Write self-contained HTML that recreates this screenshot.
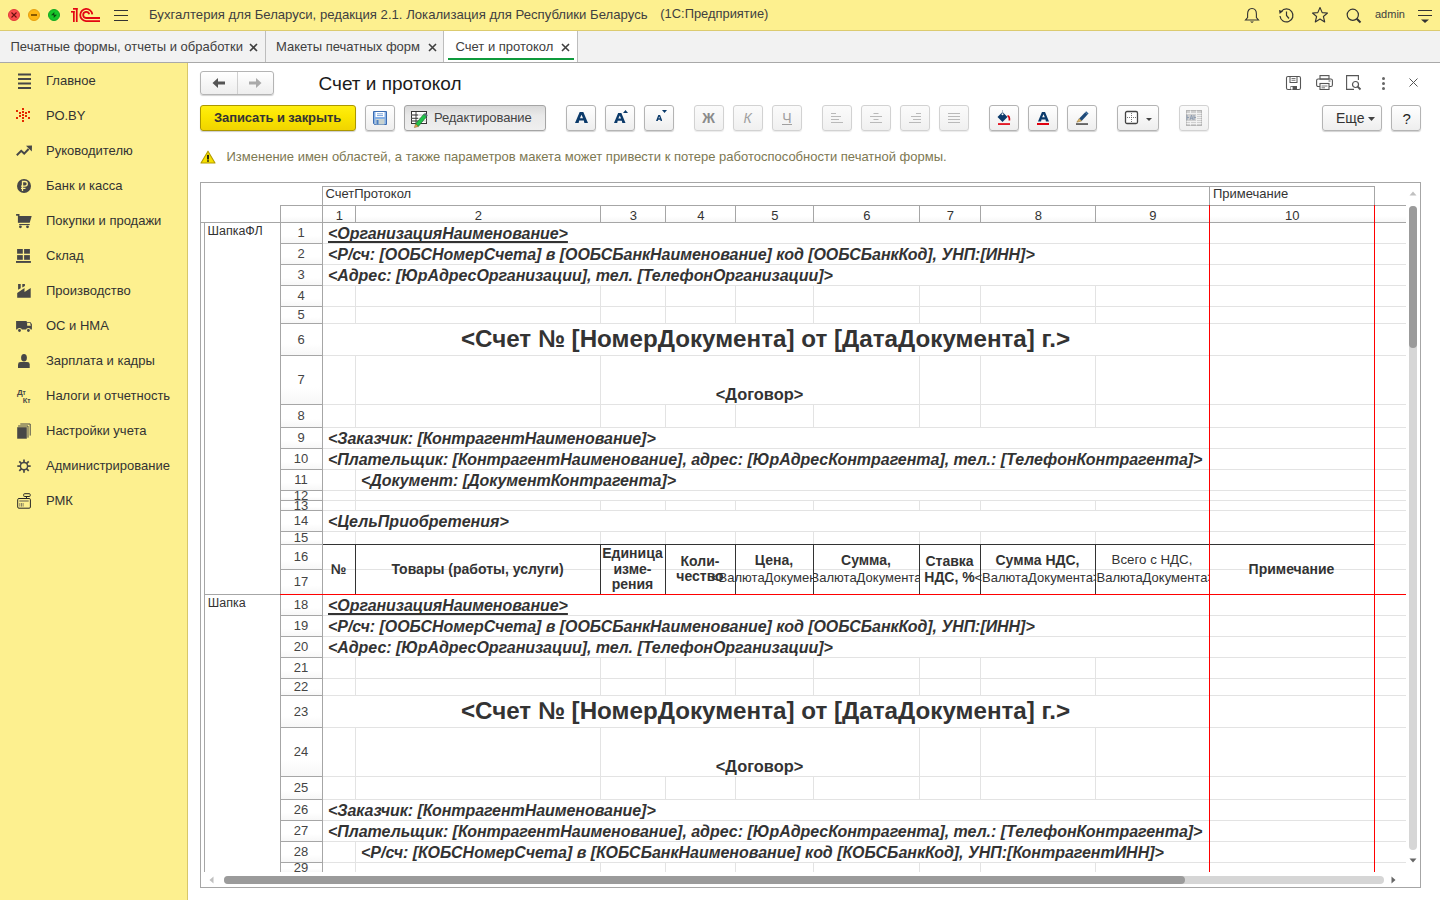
<!DOCTYPE html><html><head><meta charset="utf-8"><style>
*{margin:0;padding:0;box-sizing:border-box}
html,body{width:1440px;height:900px;overflow:hidden;background:#fff;font-family:"Liberation Sans", sans-serif;}
.a{position:absolute}
.t{position:absolute;white-space:nowrap}
.btn{position:absolute;border:1px solid #b4b4b4;border-radius:3px;background:linear-gradient(#ffffff,#eeeeee);box-shadow:0 1px 1px rgba(0,0,0,0.18)}
.btnd{position:absolute;border:1px solid #d2d2d2;border-radius:3px;background:linear-gradient(#fbfbfb,#f0f0f0);box-shadow:0 1px 1px rgba(0,0,0,0.08)}
</style></head><body>
<div class="a" style="left:0;top:0;width:1440px;height:30px;background:#fdf08f"></div>
<div class="a" style="left:0;top:30px;width:1440px;height:1px;background:#dccb6f"></div>
<div class="a" style="left:8px;top:9px;width:12px;height:12px;border-radius:50%;background:#fb4c4c;border:1px solid #e03a3a"></div>
<svg class="a" style="left:8px;top:9px" width="12" height="12"><path d="M3.5 3.5L8.5 8.5M8.5 3.5L3.5 8.5" stroke="#6a1010" stroke-width="1.1"/></svg>
<div class="a" style="left:28px;top:9px;width:12px;height:12px;border-radius:50%;background:#fdb614;border:1px solid #e69f10"></div>
<div class="a" style="left:31px;top:14px;width:6px;height:2px;background:#8a5a00"></div>
<div class="a" style="left:48px;top:9px;width:12px;height:12px;border-radius:50%;background:#17c52a;border:1px solid #12a822"></div>
<svg class="a" style="left:48px;top:9px" width="12" height="12"><path d="M3 6.3L6.3 3 6.3 6.3Z M9 5.7L5.7 9 5.7 5.7Z" fill="#0a4a10"/></svg>
<svg class="a" style="left:0;top:0" width="110" height="30" viewBox="0 0 110 30">
<rect x="71" y="11" width="3.6" height="1.6" fill="#e30613"/>
<rect x="73" y="11" width="1.7" height="11" fill="#e30613"/>
<rect x="73" y="8" width="4.6" height="1.7" fill="#e30613"/>
<rect x="75.9" y="8" width="1.7" height="14" fill="#e30613"/>
<path d="M92.3 14.3 A6.05 6.05 0 1 0 86 21.05 L100 21.05" stroke="#e30613" stroke-width="1.8" fill="none"/>
<path d="M89.2 14.3 A3.05 3.05 0 1 0 86 18 L100 18" stroke="#e30613" stroke-width="1.8" fill="none"/>
</svg>
<div class="a" style="left:114px;top:10px;width:14px;height:1px;background:#333"></div>
<div class="a" style="left:114px;top:15px;width:14px;height:1px;background:#333"></div>
<div class="a" style="left:114px;top:20px;width:14px;height:1px;background:#333"></div>
<div class="t" style="left:149px;top:7.87px;font-size:13.15px;line-height:13.15px;color:#404040;font-weight:normal;font-style:normal;">Бухгалтерия для Беларуси, редакция 2.1. Локализация для Республики Беларусь</div>
<div class="t" style="left:660.3px;top:8.08px;font-size:12.9px;line-height:12.9px;color:#404040;font-weight:normal;font-style:normal;">(1С:Предприятие)</div>
<svg class="a" style="left:1244px;top:7px" width="16" height="17" viewBox="0 0 16 17">
<path d="M8 1.5 C5 1.5 3.6 4 3.6 7 L3.6 10.5 L1.5 13 L14.5 13 L12.4 10.5 L12.4 7 C12.4 4 11 1.5 8 1.5Z" fill="none" stroke="#333" stroke-width="1.1"/>
<path d="M6 14.5 L10 14.5 L8 16Z" fill="#333"/></svg>
<svg class="a" style="left:1277px;top:7px" width="18" height="17" viewBox="0 0 18 17">
<path d="M4.3 4.5 A6.5 6.5 0 1 1 3 9" fill="none" stroke="#333" stroke-width="1.2"/>
<path d="M2 3 L6 4.3 L2.6 7Z" fill="#333"/>
<path d="M9.5 4.5 L9.5 8.5 L12 11.5" fill="none" stroke="#333" stroke-width="1.2"/></svg>
<svg class="a" style="left:1311px;top:6px" width="18" height="18" viewBox="0 0 18 18">
<path d="M9 1.5 L11.2 6.6 L16.5 7 L12.4 10.5 L13.7 16 L9 13 L4.3 16 L5.6 10.5 L1.5 7 L6.8 6.6Z" fill="none" stroke="#333" stroke-width="1.1" stroke-linejoin="round"/></svg>
<svg class="a" style="left:1346px;top:8px" width="17" height="16" viewBox="0 0 17 16">
<circle cx="6.8" cy="6.8" r="5.6" fill="none" stroke="#333" stroke-width="1.2"/>
<path d="M10.8 10.8 L14.5 14.5" stroke="#333" stroke-width="2"/></svg>
<div class="t" style="left:1375px;top:8.69px;font-size:11px;line-height:11px;color:#404040;font-weight:normal;font-style:normal;">admin</div>
<div class="a" style="left:1418px;top:10px;width:14px;height:1px;background:#333"></div>
<div class="a" style="left:1418px;top:15px;width:14px;height:1px;background:#333"></div>
<svg class="a" style="left:1420px;top:19px" width="10" height="5"><path d="M1 0.5 L9 0.5 L5 4Z" fill="#333"/></svg>
<div class="a" style="left:0;top:31px;width:1440px;height:31px;background:#f2f2f2"></div>
<div class="a" style="left:0;top:62px;width:1440px;height:1px;background:#a9a9a9"></div>
<div class="a" style="left:265px;top:31px;width:1px;height:31px;background:#bdbdbd"></div>
<div class="a" style="left:444px;top:31px;width:133px;height:31px;background:#fff"></div>
<div class="a" style="left:443px;top:31px;width:1px;height:31px;background:#bdbdbd"></div>
<div class="a" style="left:577px;top:31px;width:1px;height:31px;background:#bdbdbd"></div>
<div class="a" style="left:448px;top:58px;width:126px;height:2px;background:#0e9a3c"></div>
<div class="t" style="left:10.5px;top:40.00px;font-size:13px;line-height:13px;color:#404040;font-weight:normal;font-style:normal;">Печатные формы, отчеты и обработки</div>
<div class="t" style="left:276px;top:40.00px;font-size:13px;line-height:13px;color:#404040;font-weight:normal;font-style:normal;">Макеты печатных форм</div>
<div class="t" style="left:455.5px;top:40.00px;font-size:13px;line-height:13px;color:#404040;font-weight:normal;font-style:normal;">Счет и протокол</div>
<svg class="a" style="left:249px;top:43px" width="9" height="9"><path d="M1 1L8 8M8 1L1 8" stroke="#404040" stroke-width="1.6"/></svg>
<svg class="a" style="left:428px;top:43px" width="9" height="9"><path d="M1 1L8 8M8 1L1 8" stroke="#404040" stroke-width="1.6"/></svg>
<svg class="a" style="left:561px;top:43px" width="9" height="9"><path d="M1 1L8 8M8 1L1 8" stroke="#404040" stroke-width="1.6"/></svg>
<div class="a" style="left:0;top:63px;width:187px;height:837px;background:#fdf08f"></div>
<div class="a" style="left:187px;top:63px;width:1px;height:837px;background:#d8c76a"></div>
<div class="t" style="left:46px;top:74.00px;font-size:13px;line-height:13px;color:#333;font-weight:normal;font-style:normal;">Главное</div>
<div class="t" style="left:46px;top:109.00px;font-size:13px;line-height:13px;color:#333;font-weight:normal;font-style:normal;">РО.BY</div>
<div class="t" style="left:46px;top:144.00px;font-size:13px;line-height:13px;color:#333;font-weight:normal;font-style:normal;">Руководителю</div>
<div class="t" style="left:46px;top:179.00px;font-size:13px;line-height:13px;color:#333;font-weight:normal;font-style:normal;">Банк и касса</div>
<div class="t" style="left:46px;top:214.00px;font-size:13px;line-height:13px;color:#333;font-weight:normal;font-style:normal;">Покупки и продажи</div>
<div class="t" style="left:46px;top:249.00px;font-size:13px;line-height:13px;color:#333;font-weight:normal;font-style:normal;">Склад</div>
<div class="t" style="left:46px;top:284.00px;font-size:13px;line-height:13px;color:#333;font-weight:normal;font-style:normal;">Производство</div>
<div class="t" style="left:46px;top:319.00px;font-size:13px;line-height:13px;color:#333;font-weight:normal;font-style:normal;">ОС и НМА</div>
<div class="t" style="left:46px;top:354.00px;font-size:13px;line-height:13px;color:#333;font-weight:normal;font-style:normal;">Зарплата и кадры</div>
<div class="t" style="left:46px;top:389.00px;font-size:13px;line-height:13px;color:#333;font-weight:normal;font-style:normal;">Налоги и отчетность</div>
<div class="t" style="left:46px;top:424.00px;font-size:13px;line-height:13px;color:#333;font-weight:normal;font-style:normal;">Настройки учета</div>
<div class="t" style="left:46px;top:459.00px;font-size:13px;line-height:13px;color:#333;font-weight:normal;font-style:normal;">Администрирование</div>
<div class="t" style="left:46px;top:494.00px;font-size:13px;line-height:13px;color:#333;font-weight:normal;font-style:normal;">РМК</div>
<svg class="a" style="left:0;top:0" width="187" height="540" viewBox="0 0 187 540"><rect x="18" y="73.5" width="13" height="2" fill="#474747"/><rect x="18" y="78" width="13" height="2" fill="#474747"/><rect x="18" y="82.5" width="13" height="2" fill="#474747"/><rect x="18" y="87" width="13" height="2" fill="#474747"/><path d="M16.8 155.2 L21.2 150.8 L24.2 153.6 L28.6 149" fill="none" stroke="#474747" stroke-width="2"/><path d="M26 145.8 L32 145.6 L31.8 151.6Z" fill="#474747"/><circle cx="24" cy="186" r="7" fill="#474747"/><path d="M22.5 191 V181.5 H25 A2.3 2.3 0 0 1 25 186.1 H21 M21 188.3 H25.5" fill="none" stroke="#fdf08f" stroke-width="1.3"/><path d="M16.1 214.9 H18.7 V222.7" fill="none" stroke="#474747" stroke-width="1.6"/><path d="M18.7 216.1 H31.7 L29.7 222.7 H18.7Z" fill="#474747"/><rect x="19.2" y="224" width="10.5" height="1.1" fill="#474747"/><circle cx="20.4" cy="226.8" r="1.4" fill="#474747"/><circle cx="27.5" cy="226.8" r="1.4" fill="#474747"/><rect x="17.1" y="249" width="5.7" height="4.7" fill="#474747"/><rect x="24.1" y="249" width="5.8" height="4.7" fill="#474747"/><rect x="17.1" y="255.1" width="5.7" height="4.7" fill="#474747"/><rect x="24.1" y="255.1" width="5.8" height="4.7" fill="#474747"/><rect x="16" y="261" width="14.9" height="1.9" fill="#474747"/><path d="M17.2 292.9 L24.5 288.1 L24.5 291.9 L30.7 288.1 L30.7 297.7 L17.2 297.7Z" fill="#474747"/><path d="M18.1 284.1 H20.7 V288.3 L18.1 289.7Z M22.3 284.1 H24.9 V286 L22.3 287.6Z" fill="#474747"/><path d="M16.1 321 H26.7 V322.2 H30.6 L31.9 324.2 V329.5 H16.1Z" fill="#474747"/><path d="M27.1 323 H30.1 L30.8 325.8 H27.1Z" fill="#fdf08f"/><circle cx="19.5" cy="330.3" r="2.4" fill="#fdf08f"/><circle cx="28.4" cy="330.3" r="2.4" fill="#fdf08f"/><circle cx="19.5" cy="330.5" r="1.4" fill="#474747"/><circle cx="28.4" cy="330.5" r="1.4" fill="#474747"/><ellipse cx="24" cy="357.8" rx="2.9" ry="3.8" fill="#474747"/><path d="M18 367.9 V364.5 Q18 362.1 20.5 362.1 H27.2 Q29.7 362.1 29.7 364.5 V367.9Z" fill="#474747"/><rect x="17.2" y="427.2" width="9.6" height="11.5" fill="#474747"/><path d="M18.1 426 H28 V437.7 M20.3 424 H30.2 V435.6" fill="none" stroke="#474747" stroke-width="1"/><line x1="24.00" y1="462.60" x2="24.00" y2="459.40" stroke="#474747" stroke-width="1.7"/><line x1="26.47" y1="463.63" x2="28.74" y2="461.36" stroke="#474747" stroke-width="1.7"/><line x1="27.50" y1="466.10" x2="30.70" y2="466.10" stroke="#474747" stroke-width="1.7"/><line x1="26.47" y1="468.57" x2="28.74" y2="470.84" stroke="#474747" stroke-width="1.7"/><line x1="24.00" y1="469.60" x2="24.00" y2="472.80" stroke="#474747" stroke-width="1.7"/><line x1="21.53" y1="468.57" x2="19.26" y2="470.84" stroke="#474747" stroke-width="1.7"/><line x1="20.50" y1="466.10" x2="17.30" y2="466.10" stroke="#474747" stroke-width="1.7"/><line x1="21.53" y1="463.63" x2="19.26" y2="461.36" stroke="#474747" stroke-width="1.7"/><circle cx="24" cy="466.1" r="3.6" fill="none" stroke="#474747" stroke-width="1.4"/><rect x="17.7" y="498.5" width="12.7" height="9.7" rx="1.2" fill="none" stroke="#262626" stroke-width="1"/><rect x="23.7" y="493.7" width="6.5" height="2.8" rx="0.8" fill="none" stroke="#262626" stroke-width="1"/><rect x="26" y="496.5" width="1" height="1.5" fill="#262626"/><rect x="19.3" y="500.3" width="9.4" height="1.4" fill="#8a8560"/><rect x="19.3" y="503" width="1" height="3.6" fill="#8a8560"/><rect x="21" y="503" width="1" height="3.6" fill="#8a8560"/><rect x="22.6" y="503" width="1" height="3.6" fill="#8a8560"/></svg>
<div class="a" style="left:22px;top:108px;width:2px;height:2px;background:#e42a00"></div><div class="a" style="left:22px;top:111px;width:2px;height:2px;background:#e42a00"></div><div class="a" style="left:22px;top:114px;width:2px;height:2px;background:#e42a00"></div><div class="a" style="left:22px;top:117px;width:2px;height:2px;background:#e42a00"></div><div class="a" style="left:22px;top:120px;width:2px;height:2px;background:#e42a00"></div><div class="a" style="left:16px;top:110px;width:2px;height:2px;background:#e42a00"></div><div class="a" style="left:16px;top:117px;width:2px;height:2px;background:#e42a00"></div><div class="a" style="left:19px;top:112px;width:2px;height:2px;background:#e42a00"></div><div class="a" style="left:19px;top:115px;width:2px;height:2px;background:#e42a00"></div><div class="a" style="left:25px;top:112px;width:2px;height:2px;background:#e42a00"></div><div class="a" style="left:25px;top:115px;width:2px;height:2px;background:#e42a00"></div><div class="a" style="left:28px;top:111px;width:2px;height:2px;background:#e42a00"></div><div class="a" style="left:28px;top:117px;width:2px;height:2px;background:#e42a00"></div>
<div class="t" style="left:17px;top:388.5px;font-size:8px;line-height:8px;color:#474747;font-weight:bold;letter-spacing:-0.2px">Д<span style="font-size:6.5px">т</span></div>
<div class="t" style="left:22.8px;top:396.5px;font-size:7.5px;line-height:8px;color:#474747;font-weight:bold;letter-spacing:-0.2px">К<span style="font-size:6.5px">т</span></div>
<div class="btn" style="left:200px;top:71px;width:74px;height:24px"></div>
<div class="a" style="left:237px;top:72px;width:1px;height:22px;background:#d0d0d0"></div>
<svg class="a" style="left:211px;top:77px" width="16" height="12" viewBox="0 0 16 12"><path d="M1.5 6 L7 1 V4.6 H14 V7.4 H7 V11Z" fill="#555"/></svg>
<svg class="a" style="left:247px;top:77px" width="16" height="12" viewBox="0 0 16 12"><path d="M14.5 6 L9 1 V4.6 H2 V7.4 H9 V11Z" fill="#aaa"/></svg>
<div class="t" style="left:318.5px;top:73.92px;font-size:19px;line-height:19px;color:#1a1a1a;font-weight:normal;font-style:normal;">Счет и протокол</div>
<svg class="a" style="left:1285px;top:75px" width="17" height="16" viewBox="0 0 17 16">
<rect x="1.5" y="1.5" width="14" height="13" rx="1.5" fill="none" stroke="#555" stroke-width="1.1"/>
<rect x="5" y="1.5" width="7" height="6" fill="none" stroke="#555" stroke-width="1"/>
<path d="M6.5 3.5 H10.5 M6.5 5.3 H10.5" stroke="#555" stroke-width="0.8"/>
<rect x="5.5" y="11" width="6.5" height="3.5" fill="#555"/><rect x="6" y="11.8" width="1.6" height="2.7" fill="#fff"/></svg>
<svg class="a" style="left:1316px;top:75px" width="17" height="15" viewBox="0 0 17 15">
<rect x="4" y="0.6" width="9" height="3.5" fill="none" stroke="#555" stroke-width="1.1"/>
<rect x="0.6" y="4" width="15.8" height="7.5" rx="1.5" fill="none" stroke="#555" stroke-width="1.1"/>
<rect x="4" y="8.5" width="9" height="6" fill="#fff" stroke="#555" stroke-width="1.1"/>
<path d="M5.5 11 H11.5 M5.5 12.8 H9" stroke="#555" stroke-width="0.8"/><path d="M12.5 6 H14.5" stroke="#555" stroke-width="1"/></svg>
<svg class="a" style="left:1346px;top:75px" width="16" height="16" viewBox="0 0 16 16">
<path d="M8 14.4 H0.6 V0.6 H12.4 V5" fill="none" stroke="#555" stroke-width="1.1"/>
<circle cx="9.5" cy="9.5" r="3" fill="none" stroke="#555" stroke-width="1.2"/><path d="M11.7 11.7 L14.5 14.5" stroke="#555" stroke-width="1.8"/></svg>
<div class="a" style="left:1382px;top:77px;width:3px;height:3px;border-radius:50%;background:#666"></div>
<div class="a" style="left:1382px;top:82px;width:3px;height:3px;border-radius:50%;background:#666"></div>
<div class="a" style="left:1382px;top:87px;width:3px;height:3px;border-radius:50%;background:#666"></div>
<svg class="a" style="left:1409px;top:78px" width="9" height="9"><path d="M0.5 0.5L8.5 8.5M8.5 0.5L0.5 8.5" stroke="#555" stroke-width="1"/></svg>
<div class="a" style="left:200px;top:105px;width:156px;height:26px;border:1px solid #ab9700;border-radius:3px;background:linear-gradient(#ffee10,#fae500 45%,#f0d400);box-shadow:0 1px 1px rgba(0,0,0,0.2)"></div>
<div class="t" style="left:214px;top:111.00px;font-size:13px;line-height:13px;color:#333;font-weight:bold;font-style:normal;letter-spacing:-0.1px">Записать и закрыть</div>
<div class="btn" style="left:365px;top:105px;width:30px;height:26px"></div>
<svg class="a" style="left:372px;top:110px" width="16" height="16" viewBox="0 0 16 16">
<path d="M1.5 1.5 H14.5 V14.5 H2.5 L1.5 13.5Z" fill="#86b0e6" stroke="#3c6cb0" stroke-width="1"/>
<rect x="3.5" y="2" width="9" height="5" fill="#fff"/>
<path d="M5 3.8 H11 M5 5.6 H11" stroke="#6a98d6" stroke-width="0.9"/>
<rect x="3.5" y="9" width="9" height="5.5" fill="#c8d2d0"/><rect x="4.5" y="10" width="2" height="4.5" fill="#4a7ec4"/></svg>
<div class="a" style="left:404px;top:105px;width:142px;height:26px;border:1px solid #a5a5a5;border-radius:3px;background:linear-gradient(#d9d9d9,#e9e9e9 40%,#efefef);box-shadow:0 1px 1px rgba(0,0,0,0.15)"></div>
<svg class="a" style="left:410px;top:110px" width="18" height="18" viewBox="0 0 18 18">
<rect x="1.5" y="1.5" width="15" height="12" fill="#fff" stroke="#333" stroke-width="1"/>
<path d="M1.5 5 H16.5 M1.5 8.3 H16.5 M1.5 11 H16.5" stroke="#bbb" stroke-width="0.9"/>
<path d="M1.5 5 H8 M1.5 8.3 H8 M1.5 11 H8 M6 1.5 V13.5" stroke="#333" stroke-width="0.9"/>
<path d="M5.5 14 L13.8 4.2 L16.6 6.6 L8.3 16.4Z" fill="#1fc24a" stroke="#1a6e2e" stroke-width="0.7"/>
<path d="M13.8 4.2 L15 2.8 L17.8 5.2 L16.6 6.6Z" fill="#5a6878"/>
<path d="M5.5 14 L8.3 16.4 L4.4 17.6Z" fill="#e8b050" stroke="#7a5a20" stroke-width="0.5"/></svg>
<div class="t" style="left:434px;top:111.00px;font-size:13px;line-height:13px;color:#444;font-weight:normal;font-style:normal;letter-spacing:-0.1px">Редактирование</div>
<div class="btn" style="left:566px;top:105px;width:30px;height:26px"></div>
<svg class="a" style="left:575px;top:112px" width="13" height="11" viewBox="0 0 13 11"><path fill-rule="evenodd" d="M0 11 L4.68 0 L8.32 0 L13 11 L9.36 11 L8.84 8.58 L4.16 8.58 L3.64 11 Z M4.94 6.16 L8.06 6.16 L6.50 2.64 Z" fill="#0b3a6a"/></svg>
<div class="btn" style="left:605px;top:105px;width:30px;height:26px"></div>
<svg class="a" style="left:614.3px;top:113px" width="11.5" height="10" viewBox="0 0 11.5 10"><path fill-rule="evenodd" d="M0 10 L4.14 0 L7.36 0 L11.5 10 L8.28 10 L7.82 7.80 L3.68 7.80 L3.22 10 Z M4.37 5.60 L7.13 5.60 L5.75 2.40 Z" fill="#0b3a6a"/></svg>
<svg class="a" style="left:623px;top:110px" width="5" height="3"><path d="M0 3 L2.5 0 L5 3Z" fill="#0b3a6a"/></svg>
<div class="btn" style="left:644px;top:105px;width:30px;height:26px"></div>
<svg class="a" style="left:655.8px;top:115px" width="6.4" height="6" viewBox="0 0 6.4 6"><path fill-rule="evenodd" d="M0 6 L2.30 0 L4.10 0 L6.4 6 L4.61 6 L4.35 4.68 L2.05 4.68 L1.79 6 Z M2.43 3.36 L3.97 3.36 L3.20 1.44 Z" fill="#0b3a6a"/></svg>
<svg class="a" style="left:662px;top:110px" width="5" height="3"><path d="M0 0 L5 0 L2.5 3Z" fill="#0b3a6a"/></svg>
<div class="btnd" style="left:694px;top:105px;width:30px;height:26px"></div>
<div class="t" style="left:702.3px;top:111.15px;font-size:14px;line-height:14px;color:#8a8a8a;font-weight:bold;font-style:normal;">Ж</div>
<div class="btnd" style="left:733px;top:105px;width:30px;height:26px"></div>
<div class="t" style="left:743.5px;top:111.15px;font-size:14px;line-height:14px;color:#a0a0a0;font-weight:normal;font-style:normal;font-style:italic">К</div>
<div class="btnd" style="left:772px;top:105px;width:30px;height:26px"></div>
<div class="t" style="left:782.2px;top:111.15px;font-size:14px;line-height:14px;color:#a0a0a0;font-weight:normal;font-style:normal;">Ч</div>
<div class="a" style="left:782px;top:124px;width:10px;height:1px;background:#a0a0a0"></div>
<div class="btnd" style="left:822px;top:105px;width:30px;height:26px"></div>
<svg class="a" style="left:831px;top:113px" width="12" height="10"><rect x="0" y="0" width="5" height="1" fill="#b9b9b9"/><rect x="0" y="3" width="10" height="1" fill="#b9b9b9"/><rect x="0" y="6" width="8" height="1" fill="#b9b9b9"/><rect x="0" y="9" width="12" height="1" fill="#b9b9b9"/></svg>
<div class="btnd" style="left:861px;top:105px;width:30px;height:26px"></div>
<svg class="a" style="left:870px;top:113px" width="12" height="10"><rect x="3.5" y="0" width="5" height="1" fill="#b9b9b9"/><rect x="0.0" y="3" width="12" height="1" fill="#b9b9b9"/><rect x="3.5" y="6" width="5" height="1" fill="#b9b9b9"/><rect x="0.0" y="9" width="12" height="1" fill="#b9b9b9"/></svg>
<div class="btnd" style="left:900px;top:105px;width:30px;height:26px"></div>
<svg class="a" style="left:909px;top:113px" width="12" height="10"><rect x="7" y="0" width="5" height="1" fill="#b9b9b9"/><rect x="2" y="3" width="10" height="1" fill="#b9b9b9"/><rect x="4" y="6" width="8" height="1" fill="#b9b9b9"/><rect x="0" y="9" width="12" height="1" fill="#b9b9b9"/></svg>
<div class="btnd" style="left:939px;top:105px;width:30px;height:26px"></div>
<svg class="a" style="left:948px;top:113px" width="12" height="10"><rect x="0" y="0" width="12" height="1" fill="#b9b9b9"/><rect x="0" y="3" width="12" height="1" fill="#b9b9b9"/><rect x="0" y="6" width="12" height="1" fill="#b9b9b9"/><rect x="0" y="9" width="12" height="1" fill="#b9b9b9"/></svg>
<div class="btn" style="left:989px;top:105px;width:30px;height:26px"></div>
<svg class="a" style="left:996px;top:109px" width="16" height="17" viewBox="0 0 16 17">
<path d="M1.5 8 L6.5 3 L11.5 8 L6.5 13Z" fill="#0b3a6a"/>
<circle cx="6.5" cy="5.2" r="1" fill="#fff"/><path d="M6.5 4.5 V1" stroke="#9ab" stroke-width="0.8"/>
<path d="M11.5 6.8 C13.3 7 13.6 8.5 13.4 11.5" fill="none" stroke="#d4000e" stroke-width="1.7"/>
<rect x="2" y="14.2" width="12" height="1.7" fill="#e0000f"/></svg>
<div class="btn" style="left:1028px;top:105px;width:30px;height:26px"></div>
<svg class="a" style="left:1037.7px;top:112px" width="11" height="9.5" viewBox="0 0 11 9.5"><path fill-rule="evenodd" d="M0 9.5 L3.96 0 L7.04 0 L11 9.5 L7.92 9.5 L7.48 7.41 L3.52 7.41 L3.08 9.5 Z M4.18 5.32 L6.82 5.32 L5.50 2.28 Z" fill="#0b3a6a"/></svg>
<div class="a" style="left:1037px;top:123px;width:12px;height:2px;background:#e0000f"></div>
<div class="btn" style="left:1067px;top:105px;width:30px;height:26px"></div>
<svg class="a" style="left:1075px;top:110px" width="15" height="16" viewBox="0 0 15 16">
<path d="M4.2 8.6 L10.2 2.2 L12.6 4.6 L6.6 11Z" fill="#1e4a7a"/>
<path d="M10.2 2.2 L11.2 1.2 L13.6 3.6 L12.6 4.6Z" fill="#2e5e90"/>
<path d="M4.2 8.6 L6.6 11 L1.8 12.2Z" fill="#e0b860" stroke="#8a6a30" stroke-width="0.5"/>
<rect x="1" y="13.2" width="12" height="1.7" fill="#555"/></svg>
<div class="btn" style="left:1117px;top:105px;width:42px;height:26px"></div>
<svg class="a" style="left:1124px;top:110px" width="15" height="15" viewBox="0 0 15 15">
<rect x="1.5" y="1.5" width="12" height="12" rx="1.5" fill="#fff" stroke="#444" stroke-width="1.3"/>
<path d="M7.5 3 V12 M3 7.5 H12" stroke="#666" stroke-width="0.9" stroke-dasharray="1 1"/></svg>
<svg class="a" style="left:1146px;top:118px" width="6" height="3"><path d="M0 0 L6 0 L3 3Z" fill="#444"/></svg>
<div class="btnd" style="left:1179px;top:105px;width:30px;height:26px"></div>
<svg class="a" style="left:1186px;top:110px" width="16" height="16" viewBox="0 0 16 16">
<rect x="0.5" y="0.5" width="15" height="15" fill="#cfcfcf" stroke="#b5b5b5"/>
<path d="M0.5 3.5 H15.5 M11 5.5 H15.5 M11 7.5 H15.5 M11 9.5 H15.5 M0.5 11.5 H15.5 M0.5 13.5 H15.5" stroke="#f4f4f4" stroke-width="0.9"/>
<path d="M4.5 0.5 V3.5 M10.5 0.5 V15.5 M4.5 11.5 V15.5" stroke="#f4f4f4" stroke-width="0.9"/>
<path d="M1 5 V10 M1 7.5 H3 M4 10 L5.5 5 L7 10 M4.5 8.3 H6.5 M8 5 V10 M8 7.5 H10" stroke="#8a9ab0" stroke-width="0.9" fill="none"/></svg>
<div class="btn" style="left:1322px;top:105px;width:60px;height:26px"></div>
<div class="t" style="left:1336px;top:111.15px;font-size:14px;line-height:14px;color:#333;font-weight:normal;font-style:normal;">Еще</div>
<svg class="a" style="left:1368px;top:117px" width="7" height="4"><path d="M0 0 L7 0 L3.5 4Z" fill="#444"/></svg>
<div class="btn" style="left:1391px;top:105px;width:30px;height:26px"></div>
<div class="t" style="left:1402.5px;top:110.80px;font-size:15px;line-height:15px;color:#222;font-weight:normal;font-style:normal;">?</div>
<svg class="a" style="left:200px;top:150px" width="16" height="14" viewBox="0 0 16 14">
<path d="M8 1.2 L15 13 H1Z" fill="#f7e000" stroke="#b49c00" stroke-width="1.1" stroke-linejoin="round"/>
<rect x="7" y="4.9" width="2" height="4.6" fill="#2a2a10"/><rect x="7" y="10.3" width="2" height="1.4" fill="#2a2a10"/></svg>
<div class="t" style="left:226.5px;top:150.00px;font-size:13px;line-height:13px;color:#7d7852;font-weight:normal;font-style:normal;">Изменение имен областей, а также параметров макета может привести к потере работоспособности печатной формы.</div>
<div class="a" style="left:200px;top:182px;width:1221px;height:706px;border:1px solid #a6a6a6;background:#fff"></div>
<div class="a" style="left:201px;top:183px;width:1205px;height:689px;overflow:hidden">
<div class="a" style="left:79px;top:39px;width:42px;height:21px;background:linear-gradient(#fff 65%,#f7f7f7)"></div>
<div class="a" style="left:79px;top:60px;width:42px;height:21px;background:linear-gradient(#fff 65%,#f7f7f7)"></div>
<div class="a" style="left:79px;top:81px;width:42px;height:21px;background:linear-gradient(#fff 65%,#f7f7f7)"></div>
<div class="a" style="left:79px;top:102px;width:42px;height:21px;background:linear-gradient(#fff 65%,#f7f7f7)"></div>
<div class="a" style="left:79px;top:123px;width:42px;height:17px;background:linear-gradient(#fff 65%,#f7f7f7)"></div>
<div class="a" style="left:79px;top:140px;width:42px;height:32px;background:linear-gradient(#fff 65%,#f7f7f7)"></div>
<div class="a" style="left:79px;top:172px;width:42px;height:49px;background:linear-gradient(#fff 65%,#f7f7f7)"></div>
<div class="a" style="left:79px;top:221px;width:42px;height:23px;background:linear-gradient(#fff 65%,#f7f7f7)"></div>
<div class="a" style="left:79px;top:244px;width:42px;height:21px;background:linear-gradient(#fff 65%,#f7f7f7)"></div>
<div class="a" style="left:79px;top:265px;width:42px;height:21px;background:linear-gradient(#fff 65%,#f7f7f7)"></div>
<div class="a" style="left:79px;top:286px;width:42px;height:21px;background:linear-gradient(#fff 65%,#f7f7f7)"></div>
<div class="a" style="left:79px;top:307px;width:42px;height:10px;background:linear-gradient(#fff 65%,#f7f7f7)"></div>
<div class="a" style="left:79px;top:317px;width:42px;height:10px;background:linear-gradient(#fff 65%,#f7f7f7)"></div>
<div class="a" style="left:79px;top:327px;width:42px;height:21px;background:linear-gradient(#fff 65%,#f7f7f7)"></div>
<div class="a" style="left:79px;top:348px;width:42px;height:13px;background:linear-gradient(#fff 65%,#f7f7f7)"></div>
<div class="a" style="left:79px;top:361px;width:42px;height:25px;background:linear-gradient(#fff 65%,#f7f7f7)"></div>
<div class="a" style="left:79px;top:386px;width:42px;height:25px;background:linear-gradient(#fff 65%,#f7f7f7)"></div>
<div class="a" style="left:79px;top:411px;width:42px;height:21px;background:linear-gradient(#fff 65%,#f7f7f7)"></div>
<div class="a" style="left:79px;top:432px;width:42px;height:21px;background:linear-gradient(#fff 65%,#f7f7f7)"></div>
<div class="a" style="left:79px;top:453px;width:42px;height:21px;background:linear-gradient(#fff 65%,#f7f7f7)"></div>
<div class="a" style="left:79px;top:474px;width:42px;height:21px;background:linear-gradient(#fff 65%,#f7f7f7)"></div>
<div class="a" style="left:79px;top:495px;width:42px;height:17px;background:linear-gradient(#fff 65%,#f7f7f7)"></div>
<div class="a" style="left:79px;top:512px;width:42px;height:32px;background:linear-gradient(#fff 65%,#f7f7f7)"></div>
<div class="a" style="left:79px;top:544px;width:42px;height:49px;background:linear-gradient(#fff 65%,#f7f7f7)"></div>
<div class="a" style="left:79px;top:593px;width:42px;height:23px;background:linear-gradient(#fff 65%,#f7f7f7)"></div>
<div class="a" style="left:79px;top:616px;width:42px;height:21px;background:linear-gradient(#fff 65%,#f7f7f7)"></div>
<div class="a" style="left:79px;top:637px;width:42px;height:21px;background:linear-gradient(#fff 65%,#f7f7f7)"></div>
<div class="a" style="left:79px;top:658px;width:42px;height:21px;background:linear-gradient(#fff 65%,#f7f7f7)"></div>
<div class="a" style="left:79px;top:679px;width:42px;height:10px;background:linear-gradient(#fff 65%,#f7f7f7)"></div>
<div class="a" style="left:121px;top:22px;width:33px;height:17px;background:linear-gradient(#fff 65%,#f7f7f7)"></div>
<div class="a" style="left:154px;top:22px;width:245px;height:17px;background:linear-gradient(#fff 65%,#f7f7f7)"></div>
<div class="a" style="left:399px;top:22px;width:65px;height:17px;background:linear-gradient(#fff 65%,#f7f7f7)"></div>
<div class="a" style="left:464px;top:22px;width:70px;height:17px;background:linear-gradient(#fff 65%,#f7f7f7)"></div>
<div class="a" style="left:534px;top:22px;width:78px;height:17px;background:linear-gradient(#fff 65%,#f7f7f7)"></div>
<div class="a" style="left:612px;top:22px;width:106px;height:17px;background:linear-gradient(#fff 65%,#f7f7f7)"></div>
<div class="a" style="left:718px;top:22px;width:61px;height:17px;background:linear-gradient(#fff 65%,#f7f7f7)"></div>
<div class="a" style="left:779px;top:22px;width:115px;height:17px;background:linear-gradient(#fff 65%,#f7f7f7)"></div>
<div class="a" style="left:894px;top:22px;width:114px;height:17px;background:linear-gradient(#fff 65%,#f7f7f7)"></div>
<div class="a" style="left:1008px;top:22px;width:165px;height:17px;background:linear-gradient(#fff 65%,#f7f7f7)"></div>
<div class="a" style="left:1173px;top:22px;width:32px;height:17px;background:linear-gradient(#fff 65%,#f7f7f7)"></div>
<div class="a" style="left:79px;top:22px;width:42px;height:17px;background:linear-gradient(#fff 65%,#f7f7f7)"></div>
<div class="a" style="left:121px;top:60px;width:1084px;height:1px;background:#e3e3e3"></div>
<div class="a" style="left:121px;top:81px;width:1084px;height:1px;background:#e3e3e3"></div>
<div class="a" style="left:121px;top:102px;width:1084px;height:1px;background:#e3e3e3"></div>
<div class="a" style="left:121px;top:123px;width:1084px;height:1px;background:#e3e3e3"></div>
<div class="a" style="left:121px;top:140px;width:1084px;height:1px;background:#e3e3e3"></div>
<div class="a" style="left:121px;top:172px;width:1084px;height:1px;background:#e3e3e3"></div>
<div class="a" style="left:121px;top:221px;width:1084px;height:1px;background:#e3e3e3"></div>
<div class="a" style="left:121px;top:244px;width:1084px;height:1px;background:#e3e3e3"></div>
<div class="a" style="left:121px;top:265px;width:1084px;height:1px;background:#e3e3e3"></div>
<div class="a" style="left:121px;top:286px;width:1084px;height:1px;background:#e3e3e3"></div>
<div class="a" style="left:121px;top:307px;width:1084px;height:1px;background:#e3e3e3"></div>
<div class="a" style="left:121px;top:317px;width:1084px;height:1px;background:#e3e3e3"></div>
<div class="a" style="left:121px;top:327px;width:1084px;height:1px;background:#e3e3e3"></div>
<div class="a" style="left:121px;top:348px;width:1084px;height:1px;background:#e3e3e3"></div>
<div class="a" style="left:121px;top:361px;width:1084px;height:1px;background:#e3e3e3"></div>
<div class="a" style="left:121px;top:386px;width:1084px;height:1px;background:#e3e3e3"></div>
<div class="a" style="left:121px;top:411px;width:1084px;height:1px;background:#e3e3e3"></div>
<div class="a" style="left:121px;top:432px;width:1084px;height:1px;background:#e3e3e3"></div>
<div class="a" style="left:121px;top:453px;width:1084px;height:1px;background:#e3e3e3"></div>
<div class="a" style="left:121px;top:474px;width:1084px;height:1px;background:#e3e3e3"></div>
<div class="a" style="left:121px;top:495px;width:1084px;height:1px;background:#e3e3e3"></div>
<div class="a" style="left:121px;top:512px;width:1084px;height:1px;background:#e3e3e3"></div>
<div class="a" style="left:121px;top:544px;width:1084px;height:1px;background:#e3e3e3"></div>
<div class="a" style="left:121px;top:593px;width:1084px;height:1px;background:#e3e3e3"></div>
<div class="a" style="left:121px;top:616px;width:1084px;height:1px;background:#e3e3e3"></div>
<div class="a" style="left:121px;top:637px;width:1084px;height:1px;background:#e3e3e3"></div>
<div class="a" style="left:121px;top:658px;width:1084px;height:1px;background:#e3e3e3"></div>
<div class="a" style="left:121px;top:679px;width:1084px;height:1px;background:#e3e3e3"></div>
<div class="a" style="left:154px;top:103px;width:1px;height:20px;background:#e3e3e3"></div>
<div class="a" style="left:399px;top:103px;width:1px;height:20px;background:#e3e3e3"></div>
<div class="a" style="left:464px;top:103px;width:1px;height:20px;background:#e3e3e3"></div>
<div class="a" style="left:534px;top:103px;width:1px;height:20px;background:#e3e3e3"></div>
<div class="a" style="left:612px;top:103px;width:1px;height:20px;background:#e3e3e3"></div>
<div class="a" style="left:718px;top:103px;width:1px;height:20px;background:#e3e3e3"></div>
<div class="a" style="left:779px;top:103px;width:1px;height:20px;background:#e3e3e3"></div>
<div class="a" style="left:894px;top:103px;width:1px;height:20px;background:#e3e3e3"></div>
<div class="a" style="left:154px;top:124px;width:1px;height:16px;background:#e3e3e3"></div>
<div class="a" style="left:399px;top:124px;width:1px;height:16px;background:#e3e3e3"></div>
<div class="a" style="left:464px;top:124px;width:1px;height:16px;background:#e3e3e3"></div>
<div class="a" style="left:534px;top:124px;width:1px;height:16px;background:#e3e3e3"></div>
<div class="a" style="left:612px;top:124px;width:1px;height:16px;background:#e3e3e3"></div>
<div class="a" style="left:718px;top:124px;width:1px;height:16px;background:#e3e3e3"></div>
<div class="a" style="left:779px;top:124px;width:1px;height:16px;background:#e3e3e3"></div>
<div class="a" style="left:894px;top:124px;width:1px;height:16px;background:#e3e3e3"></div>
<div class="a" style="left:154px;top:173px;width:1px;height:48px;background:#e3e3e3"></div>
<div class="a" style="left:399px;top:173px;width:1px;height:48px;background:#e3e3e3"></div>
<div class="a" style="left:718px;top:173px;width:1px;height:48px;background:#e3e3e3"></div>
<div class="a" style="left:779px;top:173px;width:1px;height:48px;background:#e3e3e3"></div>
<div class="a" style="left:894px;top:173px;width:1px;height:48px;background:#e3e3e3"></div>
<div class="a" style="left:154px;top:222px;width:1px;height:22px;background:#e3e3e3"></div>
<div class="a" style="left:399px;top:222px;width:1px;height:22px;background:#e3e3e3"></div>
<div class="a" style="left:464px;top:222px;width:1px;height:22px;background:#e3e3e3"></div>
<div class="a" style="left:534px;top:222px;width:1px;height:22px;background:#e3e3e3"></div>
<div class="a" style="left:612px;top:222px;width:1px;height:22px;background:#e3e3e3"></div>
<div class="a" style="left:718px;top:222px;width:1px;height:22px;background:#e3e3e3"></div>
<div class="a" style="left:779px;top:222px;width:1px;height:22px;background:#e3e3e3"></div>
<div class="a" style="left:894px;top:222px;width:1px;height:22px;background:#e3e3e3"></div>
<div class="a" style="left:154px;top:287px;width:1px;height:20px;background:#e3e3e3"></div>
<div class="a" style="left:154px;top:308px;width:1px;height:9px;background:#e3e3e3"></div>
<div class="a" style="left:154px;top:318px;width:1px;height:9px;background:#e3e3e3"></div>
<div class="a" style="left:399px;top:318px;width:1px;height:9px;background:#e3e3e3"></div>
<div class="a" style="left:464px;top:318px;width:1px;height:9px;background:#e3e3e3"></div>
<div class="a" style="left:534px;top:318px;width:1px;height:9px;background:#e3e3e3"></div>
<div class="a" style="left:612px;top:318px;width:1px;height:9px;background:#e3e3e3"></div>
<div class="a" style="left:718px;top:318px;width:1px;height:9px;background:#e3e3e3"></div>
<div class="a" style="left:779px;top:318px;width:1px;height:9px;background:#e3e3e3"></div>
<div class="a" style="left:894px;top:318px;width:1px;height:9px;background:#e3e3e3"></div>
<div class="a" style="left:154px;top:349px;width:1px;height:12px;background:#e3e3e3"></div>
<div class="a" style="left:399px;top:349px;width:1px;height:12px;background:#e3e3e3"></div>
<div class="a" style="left:464px;top:349px;width:1px;height:12px;background:#e3e3e3"></div>
<div class="a" style="left:534px;top:349px;width:1px;height:12px;background:#e3e3e3"></div>
<div class="a" style="left:612px;top:349px;width:1px;height:12px;background:#e3e3e3"></div>
<div class="a" style="left:718px;top:349px;width:1px;height:12px;background:#e3e3e3"></div>
<div class="a" style="left:779px;top:349px;width:1px;height:12px;background:#e3e3e3"></div>
<div class="a" style="left:894px;top:349px;width:1px;height:12px;background:#e3e3e3"></div>
<div class="a" style="left:154px;top:475px;width:1px;height:20px;background:#e3e3e3"></div>
<div class="a" style="left:399px;top:475px;width:1px;height:20px;background:#e3e3e3"></div>
<div class="a" style="left:464px;top:475px;width:1px;height:20px;background:#e3e3e3"></div>
<div class="a" style="left:534px;top:475px;width:1px;height:20px;background:#e3e3e3"></div>
<div class="a" style="left:612px;top:475px;width:1px;height:20px;background:#e3e3e3"></div>
<div class="a" style="left:718px;top:475px;width:1px;height:20px;background:#e3e3e3"></div>
<div class="a" style="left:779px;top:475px;width:1px;height:20px;background:#e3e3e3"></div>
<div class="a" style="left:894px;top:475px;width:1px;height:20px;background:#e3e3e3"></div>
<div class="a" style="left:154px;top:496px;width:1px;height:16px;background:#e3e3e3"></div>
<div class="a" style="left:399px;top:496px;width:1px;height:16px;background:#e3e3e3"></div>
<div class="a" style="left:464px;top:496px;width:1px;height:16px;background:#e3e3e3"></div>
<div class="a" style="left:534px;top:496px;width:1px;height:16px;background:#e3e3e3"></div>
<div class="a" style="left:612px;top:496px;width:1px;height:16px;background:#e3e3e3"></div>
<div class="a" style="left:718px;top:496px;width:1px;height:16px;background:#e3e3e3"></div>
<div class="a" style="left:779px;top:496px;width:1px;height:16px;background:#e3e3e3"></div>
<div class="a" style="left:894px;top:496px;width:1px;height:16px;background:#e3e3e3"></div>
<div class="a" style="left:154px;top:545px;width:1px;height:48px;background:#e3e3e3"></div>
<div class="a" style="left:399px;top:545px;width:1px;height:48px;background:#e3e3e3"></div>
<div class="a" style="left:718px;top:545px;width:1px;height:48px;background:#e3e3e3"></div>
<div class="a" style="left:779px;top:545px;width:1px;height:48px;background:#e3e3e3"></div>
<div class="a" style="left:894px;top:545px;width:1px;height:48px;background:#e3e3e3"></div>
<div class="a" style="left:154px;top:594px;width:1px;height:22px;background:#e3e3e3"></div>
<div class="a" style="left:399px;top:594px;width:1px;height:22px;background:#e3e3e3"></div>
<div class="a" style="left:464px;top:594px;width:1px;height:22px;background:#e3e3e3"></div>
<div class="a" style="left:534px;top:594px;width:1px;height:22px;background:#e3e3e3"></div>
<div class="a" style="left:612px;top:594px;width:1px;height:22px;background:#e3e3e3"></div>
<div class="a" style="left:718px;top:594px;width:1px;height:22px;background:#e3e3e3"></div>
<div class="a" style="left:779px;top:594px;width:1px;height:22px;background:#e3e3e3"></div>
<div class="a" style="left:894px;top:594px;width:1px;height:22px;background:#e3e3e3"></div>
<div class="a" style="left:154px;top:659px;width:1px;height:20px;background:#e3e3e3"></div>
<div class="a" style="left:154px;top:680px;width:1px;height:9px;background:#e3e3e3"></div>
<div class="a" style="left:399px;top:680px;width:1px;height:9px;background:#e3e3e3"></div>
<div class="a" style="left:464px;top:680px;width:1px;height:9px;background:#e3e3e3"></div>
<div class="a" style="left:534px;top:680px;width:1px;height:9px;background:#e3e3e3"></div>
<div class="a" style="left:612px;top:680px;width:1px;height:9px;background:#e3e3e3"></div>
<div class="a" style="left:718px;top:680px;width:1px;height:9px;background:#e3e3e3"></div>
<div class="a" style="left:779px;top:680px;width:1px;height:9px;background:#e3e3e3"></div>
<div class="a" style="left:894px;top:680px;width:1px;height:9px;background:#e3e3e3"></div>
<div class="a" style="left:79px;top:39px;width:42px;height:1px;background:#a6a6a6"></div>
<div class="a" style="left:79px;top:60px;width:42px;height:1px;background:#a6a6a6"></div>
<div class="a" style="left:79px;top:81px;width:42px;height:1px;background:#a6a6a6"></div>
<div class="a" style="left:79px;top:102px;width:42px;height:1px;background:#a6a6a6"></div>
<div class="a" style="left:79px;top:123px;width:42px;height:1px;background:#a6a6a6"></div>
<div class="a" style="left:79px;top:140px;width:42px;height:1px;background:#a6a6a6"></div>
<div class="a" style="left:79px;top:172px;width:42px;height:1px;background:#a6a6a6"></div>
<div class="a" style="left:79px;top:221px;width:42px;height:1px;background:#a6a6a6"></div>
<div class="a" style="left:79px;top:244px;width:42px;height:1px;background:#a6a6a6"></div>
<div class="a" style="left:79px;top:265px;width:42px;height:1px;background:#a6a6a6"></div>
<div class="a" style="left:79px;top:286px;width:42px;height:1px;background:#a6a6a6"></div>
<div class="a" style="left:79px;top:307px;width:42px;height:1px;background:#a6a6a6"></div>
<div class="a" style="left:79px;top:317px;width:42px;height:1px;background:#a6a6a6"></div>
<div class="a" style="left:79px;top:327px;width:42px;height:1px;background:#a6a6a6"></div>
<div class="a" style="left:79px;top:348px;width:42px;height:1px;background:#a6a6a6"></div>
<div class="a" style="left:79px;top:361px;width:42px;height:1px;background:#a6a6a6"></div>
<div class="a" style="left:79px;top:386px;width:42px;height:1px;background:#a6a6a6"></div>
<div class="a" style="left:79px;top:411px;width:42px;height:1px;background:#a6a6a6"></div>
<div class="a" style="left:79px;top:432px;width:42px;height:1px;background:#a6a6a6"></div>
<div class="a" style="left:79px;top:453px;width:42px;height:1px;background:#a6a6a6"></div>
<div class="a" style="left:79px;top:474px;width:42px;height:1px;background:#a6a6a6"></div>
<div class="a" style="left:79px;top:495px;width:42px;height:1px;background:#a6a6a6"></div>
<div class="a" style="left:79px;top:512px;width:42px;height:1px;background:#a6a6a6"></div>
<div class="a" style="left:79px;top:544px;width:42px;height:1px;background:#a6a6a6"></div>
<div class="a" style="left:79px;top:593px;width:42px;height:1px;background:#a6a6a6"></div>
<div class="a" style="left:79px;top:616px;width:42px;height:1px;background:#a6a6a6"></div>
<div class="a" style="left:79px;top:637px;width:42px;height:1px;background:#a6a6a6"></div>
<div class="a" style="left:79px;top:658px;width:42px;height:1px;background:#a6a6a6"></div>
<div class="a" style="left:79px;top:679px;width:42px;height:1px;background:#a6a6a6"></div>
<div class="a" style="left:79px;top:22px;width:1px;height:667px;background:#a6a6a6"></div>
<div class="a" style="left:121px;top:3px;width:1px;height:686px;background:#a6a6a6"></div>
<div class="a" style="left:79px;top:22px;width:1126px;height:1px;background:#a6a6a6"></div>
<div class="a" style="left:0px;top:39px;width:1205px;height:1px;background:#a6a6a6"></div>
<div class="a" style="left:154px;top:22px;width:1px;height:17px;background:#a6a6a6"></div>
<div class="a" style="left:399px;top:22px;width:1px;height:17px;background:#a6a6a6"></div>
<div class="a" style="left:464px;top:22px;width:1px;height:17px;background:#a6a6a6"></div>
<div class="a" style="left:534px;top:22px;width:1px;height:17px;background:#a6a6a6"></div>
<div class="a" style="left:612px;top:22px;width:1px;height:17px;background:#a6a6a6"></div>
<div class="a" style="left:718px;top:22px;width:1px;height:17px;background:#a6a6a6"></div>
<div class="a" style="left:779px;top:22px;width:1px;height:17px;background:#a6a6a6"></div>
<div class="a" style="left:894px;top:22px;width:1px;height:17px;background:#a6a6a6"></div>
<div class="a" style="left:1008px;top:22px;width:1px;height:17px;background:#a6a6a6"></div>
<div class="a" style="left:1173px;top:22px;width:1px;height:17px;background:#a6a6a6"></div>
<div class="a" style="left:121px;top:3px;width:1053px;height:1px;background:#a6a6a6"></div>
<div class="a" style="left:1008px;top:3px;width:1px;height:19px;background:#a6a6a6"></div>
<div class="a" style="left:1173px;top:3px;width:1px;height:19px;background:#a6a6a6"></div>
<div class="a" style="left:3px;top:39px;width:1px;height:650px;background:#a6a6a6"></div>
<div class="a" style="left:3px;top:411px;width:76px;height:1px;background:#a6a6a6"></div>
<div class="a" style="left:1008px;top:22px;width:1px;height:667px;background:#ff0000"></div>
<div class="a" style="left:1173px;top:22px;width:1px;height:667px;background:#ff0000"></div>
<div class="a" style="left:79px;top:411px;width:1126px;height:1px;background:#ff0000"></div>
<div class="t" style="left:124.5px;top:3.70px;font-size:13px;line-height:13px;color:#333;font-weight:normal;font-style:normal;">СчетПротокол</div>
<div class="t" style="left:1012px;top:3.70px;font-size:13px;line-height:13px;color:#333;font-weight:normal;font-style:normal;">Примечание</div>
<div class="t" style="left:-861.75px;width:2000px;text-align:center;top:26.20px;font-size:13px;line-height:13px;color:#333;font-weight:normal;font-style:normal;">1</div>
<div class="t" style="left:-722.75px;width:2000px;text-align:center;top:26.20px;font-size:13px;line-height:13px;color:#333;font-weight:normal;font-style:normal;">2</div>
<div class="t" style="left:-567.75px;width:2000px;text-align:center;top:26.20px;font-size:13px;line-height:13px;color:#333;font-weight:normal;font-style:normal;">3</div>
<div class="t" style="left:-500.25px;width:2000px;text-align:center;top:26.20px;font-size:13px;line-height:13px;color:#333;font-weight:normal;font-style:normal;">4</div>
<div class="t" style="left:-426.25px;width:2000px;text-align:center;top:26.20px;font-size:13px;line-height:13px;color:#333;font-weight:normal;font-style:normal;">5</div>
<div class="t" style="left:-334.25px;width:2000px;text-align:center;top:26.20px;font-size:13px;line-height:13px;color:#333;font-weight:normal;font-style:normal;">6</div>
<div class="t" style="left:-250.75px;width:2000px;text-align:center;top:26.20px;font-size:13px;line-height:13px;color:#333;font-weight:normal;font-style:normal;">7</div>
<div class="t" style="left:-162.75px;width:2000px;text-align:center;top:26.20px;font-size:13px;line-height:13px;color:#333;font-weight:normal;font-style:normal;">8</div>
<div class="t" style="left:-48.25px;width:2000px;text-align:center;top:26.20px;font-size:13px;line-height:13px;color:#333;font-weight:normal;font-style:normal;">9</div>
<div class="t" style="left:91.25px;width:2000px;text-align:center;top:26.20px;font-size:13px;line-height:13px;color:#333;font-weight:normal;font-style:normal;">10</div>
<div class="t" style="left:6.5px;top:41.92px;font-size:12.5px;line-height:12.5px;color:#333;font-weight:normal;font-style:normal;">ШапкаФЛ</div>
<div class="t" style="left:6.800000000000011px;top:413.92px;font-size:12.5px;line-height:12.5px;color:#333;font-weight:normal;font-style:normal;">Шапка</div>
<div class="t" style="left:-900.0px;width:2000px;text-align:center;top:43.20px;font-size:13px;line-height:13px;color:#444;font-weight:normal;font-style:normal;">1</div>
<div class="t" style="left:-900.0px;width:2000px;text-align:center;top:64.20px;font-size:13px;line-height:13px;color:#444;font-weight:normal;font-style:normal;">2</div>
<div class="t" style="left:-900.0px;width:2000px;text-align:center;top:85.20px;font-size:13px;line-height:13px;color:#444;font-weight:normal;font-style:normal;">3</div>
<div class="t" style="left:-900.0px;width:2000px;text-align:center;top:106.20px;font-size:13px;line-height:13px;color:#444;font-weight:normal;font-style:normal;">4</div>
<div class="t" style="left:-900.0px;width:2000px;text-align:center;top:125.20px;font-size:13px;line-height:13px;color:#444;font-weight:normal;font-style:normal;">5</div>
<div class="t" style="left:-900.0px;width:2000px;text-align:center;top:149.70px;font-size:13px;line-height:13px;color:#444;font-weight:normal;font-style:normal;">6</div>
<div class="t" style="left:-900.0px;width:2000px;text-align:center;top:190.20px;font-size:13px;line-height:13px;color:#444;font-weight:normal;font-style:normal;">7</div>
<div class="t" style="left:-900.0px;width:2000px;text-align:center;top:226.20px;font-size:13px;line-height:13px;color:#444;font-weight:normal;font-style:normal;">8</div>
<div class="t" style="left:-900.0px;width:2000px;text-align:center;top:248.20px;font-size:13px;line-height:13px;color:#444;font-weight:normal;font-style:normal;">9</div>
<div class="t" style="left:-900.0px;width:2000px;text-align:center;top:269.20px;font-size:13px;line-height:13px;color:#444;font-weight:normal;font-style:normal;">10</div>
<div class="t" style="left:-900.0px;width:2000px;text-align:center;top:290.20px;font-size:13px;line-height:13px;color:#444;font-weight:normal;font-style:normal;">11</div>
<div class="t" style="left:-900.0px;width:2000px;text-align:center;top:305.70px;font-size:13px;line-height:13px;color:#444;font-weight:normal;font-style:normal;">12</div>
<div class="t" style="left:-900.0px;width:2000px;text-align:center;top:315.70px;font-size:13px;line-height:13px;color:#444;font-weight:normal;font-style:normal;">13</div>
<div class="t" style="left:-900.0px;width:2000px;text-align:center;top:331.20px;font-size:13px;line-height:13px;color:#444;font-weight:normal;font-style:normal;">14</div>
<div class="t" style="left:-900.0px;width:2000px;text-align:center;top:348.20px;font-size:13px;line-height:13px;color:#444;font-weight:normal;font-style:normal;">15</div>
<div class="t" style="left:-900.0px;width:2000px;text-align:center;top:367.20px;font-size:13px;line-height:13px;color:#444;font-weight:normal;font-style:normal;">16</div>
<div class="t" style="left:-900.0px;width:2000px;text-align:center;top:392.20px;font-size:13px;line-height:13px;color:#444;font-weight:normal;font-style:normal;">17</div>
<div class="t" style="left:-900.0px;width:2000px;text-align:center;top:415.20px;font-size:13px;line-height:13px;color:#444;font-weight:normal;font-style:normal;">18</div>
<div class="t" style="left:-900.0px;width:2000px;text-align:center;top:436.20px;font-size:13px;line-height:13px;color:#444;font-weight:normal;font-style:normal;">19</div>
<div class="t" style="left:-900.0px;width:2000px;text-align:center;top:457.20px;font-size:13px;line-height:13px;color:#444;font-weight:normal;font-style:normal;">20</div>
<div class="t" style="left:-900.0px;width:2000px;text-align:center;top:478.20px;font-size:13px;line-height:13px;color:#444;font-weight:normal;font-style:normal;">21</div>
<div class="t" style="left:-900.0px;width:2000px;text-align:center;top:497.20px;font-size:13px;line-height:13px;color:#444;font-weight:normal;font-style:normal;">22</div>
<div class="t" style="left:-900.0px;width:2000px;text-align:center;top:521.70px;font-size:13px;line-height:13px;color:#444;font-weight:normal;font-style:normal;">23</div>
<div class="t" style="left:-900.0px;width:2000px;text-align:center;top:562.20px;font-size:13px;line-height:13px;color:#444;font-weight:normal;font-style:normal;">24</div>
<div class="t" style="left:-900.0px;width:2000px;text-align:center;top:598.20px;font-size:13px;line-height:13px;color:#444;font-weight:normal;font-style:normal;">25</div>
<div class="t" style="left:-900.0px;width:2000px;text-align:center;top:620.20px;font-size:13px;line-height:13px;color:#444;font-weight:normal;font-style:normal;">26</div>
<div class="t" style="left:-900.0px;width:2000px;text-align:center;top:641.20px;font-size:13px;line-height:13px;color:#444;font-weight:normal;font-style:normal;">27</div>
<div class="t" style="left:-900.0px;width:2000px;text-align:center;top:662.20px;font-size:13px;line-height:13px;color:#444;font-weight:normal;font-style:normal;">28</div>
<div class="t" style="left:-900.0px;width:2000px;text-align:center;top:678.20px;font-size:13px;line-height:13px;color:#444;font-weight:normal;font-style:normal;">29</div>
<div class="t" style="left:127px;top:42.76px;font-size:16px;line-height:16px;color:#333;font-weight:bold;font-style:italic;letter-spacing:-0.055px"><u style="text-decoration-thickness:2px;text-underline-offset:1.5px;text-decoration-skip-ink:none">&lt;ОрганизацияНаименование&gt;</u></div>
<div class="t" style="left:127px;top:63.76px;font-size:16px;line-height:16px;color:#333;font-weight:bold;font-style:italic;letter-spacing:-0.055px">&lt;Р/сч: [ООБСНомерСчета] в [ООБСБанкНаименование] код [ООБСБанкКод], УНП:[ИНН]&gt;</div>
<div class="t" style="left:127px;top:84.76px;font-size:16px;line-height:16px;color:#333;font-weight:bold;font-style:italic;letter-spacing:-0.055px">&lt;Адрес: [ЮрАдресОрганизации], тел. [ТелефонОрганизации]&gt;</div>
<div class="t" style="left:-435.5px;width:2000px;text-align:center;top:144.01px;font-size:24.2px;line-height:24.2px;color:#333;font-weight:bold;font-style:normal;">&lt;Счет № [НомерДокумента] от [ДатаДокумента] г.&gt;</div>
<div class="t" style="left:-441.5px;width:2000px;text-align:center;top:203.12px;font-size:16.4px;line-height:16.4px;color:#333;font-weight:bold;font-style:normal;">&lt;Договор&gt;</div>
<div class="t" style="left:127px;top:247.76px;font-size:16px;line-height:16px;color:#333;font-weight:bold;font-style:italic;letter-spacing:-0.055px">&lt;Заказчик: [КонтрагентНаименование]&gt;</div>
<div class="t" style="left:127px;top:268.76px;font-size:16px;line-height:16px;color:#333;font-weight:bold;font-style:italic;letter-spacing:-0.02px">&lt;Плательщик: [КонтрагентНаименование], адрес: [ЮрАдресКонтрагента], тел.: [ТелефонКонтрагента]&gt;</div>
<div class="t" style="left:160px;top:289.76px;font-size:16px;line-height:16px;color:#333;font-weight:bold;font-style:italic;letter-spacing:-0.055px">&lt;Документ: [ДокументКонтрагента]&gt;</div>
<div class="t" style="left:127px;top:330.76px;font-size:16px;line-height:16px;color:#333;font-weight:bold;font-style:italic;letter-spacing:0.05px">&lt;ЦельПриобретения&gt;</div>
<div class="t" style="left:127px;top:414.76px;font-size:16px;line-height:16px;color:#333;font-weight:bold;font-style:italic;letter-spacing:-0.055px"><u style="text-decoration-thickness:2px;text-underline-offset:1.5px;text-decoration-skip-ink:none">&lt;ОрганизацияНаименование&gt;</u></div>
<div class="t" style="left:127px;top:435.76px;font-size:16px;line-height:16px;color:#333;font-weight:bold;font-style:italic;letter-spacing:-0.055px">&lt;Р/сч: [ООБСНомерСчета] в [ООБСБанкНаименование] код [ООБСБанкКод], УНП:[ИНН]&gt;</div>
<div class="t" style="left:127px;top:456.76px;font-size:16px;line-height:16px;color:#333;font-weight:bold;font-style:italic;letter-spacing:-0.055px">&lt;Адрес: [ЮрАдресОрганизации], тел. [ТелефонОрганизации]&gt;</div>
<div class="t" style="left:-435.5px;width:2000px;text-align:center;top:516.01px;font-size:24.2px;line-height:24.2px;color:#333;font-weight:bold;font-style:normal;">&lt;Счет № [НомерДокумента] от [ДатаДокумента] г.&gt;</div>
<div class="t" style="left:-441.5px;width:2000px;text-align:center;top:575.12px;font-size:16.4px;line-height:16.4px;color:#333;font-weight:bold;font-style:normal;">&lt;Договор&gt;</div>
<div class="t" style="left:127px;top:619.76px;font-size:16px;line-height:16px;color:#333;font-weight:bold;font-style:italic;letter-spacing:-0.055px">&lt;Заказчик: [КонтрагентНаименование]&gt;</div>
<div class="t" style="left:127px;top:640.76px;font-size:16px;line-height:16px;color:#333;font-weight:bold;font-style:italic;letter-spacing:-0.02px">&lt;Плательщик: [КонтрагентНаименование], адрес: [ЮрАдресКонтрагента], тел.: [ТелефонКонтрагента]&gt;</div>
<div class="t" style="left:160px;top:661.76px;font-size:16px;line-height:16px;color:#333;font-weight:bold;font-style:italic;letter-spacing:-0.025px">&lt;Р/сч: [КОБСНомерСчета] в [КОБСБанкНаименование] код [КОБСБанкКод], УНП:[КонтрагентИНН]&gt;</div>
<div class="t" style="left:-862.5px;width:2000px;text-align:center;top:379.15px;font-size:14px;line-height:14px;color:#333;font-weight:bold;font-style:normal;">№</div>
<div class="t" style="left:-723.5px;width:2000px;text-align:center;top:379.15px;font-size:14px;line-height:14px;color:#333;font-weight:bold;font-style:normal;">Товары (работы, услуги)</div>
<div class="t" style="left:-568.5px;width:2000px;text-align:center;top:363.45px;font-size:14px;line-height:14px;color:#333;font-weight:bold;font-style:normal;">Единица</div>
<div class="t" style="left:-568.5px;width:2000px;text-align:center;top:378.95px;font-size:14px;line-height:14px;color:#333;font-weight:bold;font-style:normal;">изме-</div>
<div class="t" style="left:-568.5px;width:2000px;text-align:center;top:394.15px;font-size:14px;line-height:14px;color:#333;font-weight:bold;font-style:normal;">рения</div>
<div class="t" style="left:-501.0px;width:2000px;text-align:center;top:370.85px;font-size:14px;line-height:14px;color:#333;font-weight:bold;font-style:normal;">Коли-</div>
<div class="t" style="left:-501.0px;width:2000px;text-align:center;top:386.15px;font-size:14px;line-height:14px;color:#333;font-weight:bold;font-style:normal;">чество</div>
<div class="t" style="left:-251.5px;width:2000px;text-align:center;top:371.15px;font-size:14px;line-height:14px;color:#333;font-weight:bold;font-style:normal;">Ставка</div>
<div class="t" style="left:-251.5px;width:2000px;text-align:center;top:386.65px;font-size:14px;line-height:14px;color:#333;font-weight:bold;font-style:normal;">НДС, %</div>
<div class="t" style="left:90.5px;width:2000px;text-align:center;top:379.15px;font-size:14px;line-height:14px;color:#333;font-weight:bold;font-style:normal;">Примечание</div>
<div class="t" style="left:-427.0px;width:2000px;text-align:center;top:369.65px;font-size:14px;line-height:14px;color:#333;font-weight:bold;font-style:normal;">Цена,</div>
<div class="t" style="left:-335.0px;width:2000px;text-align:center;top:369.65px;font-size:14px;line-height:14px;color:#333;font-weight:bold;font-style:normal;">Сумма,</div>
<div class="t" style="left:-163.5px;width:2000px;text-align:center;top:369.65px;font-size:14px;line-height:14px;color:#333;font-weight:bold;font-style:normal;">Сумма НДС,</div>
<div class="t" style="left:-49.0px;width:2000px;text-align:center;top:370.24px;font-size:13.3px;line-height:13.3px;color:#333;font-weight:normal;font-style:normal;">Всего с НДС,</div>
<div class="a" style="left:894px;top:387px;width:114px;height:24px;overflow:hidden"><div class="a" style="left:-894px;top:-387px;width:1440px;height:900px"><div class="a" style="left:895px;top:387px;width:113px;height:24px;background:#fff"></div><div class="t" style="left:-49.0px;width:2000px;text-align:center;top:388.20px;font-size:13px;line-height:13px;color:#333;font-weight:normal;font-style:normal;">&lt;ВалютаДокумента&gt;</div></div></div>
<div class="a" style="left:718px;top:387px;width:176px;height:24px;overflow:hidden"><div class="a" style="left:-718px;top:-387px;width:1440px;height:900px"><div class="a" style="left:780px;top:387px;width:114px;height:24px;background:#fff"></div><div class="t" style="left:-163.5px;width:2000px;text-align:center;top:388.20px;font-size:13px;line-height:13px;color:#333;font-weight:normal;font-style:normal;">&lt;ВалютаДокумента&gt;</div></div></div>
<div class="a" style="left:612px;top:387px;width:106px;height:24px;overflow:hidden"><div class="a" style="left:-612px;top:-387px;width:1440px;height:900px"><div class="a" style="left:613px;top:387px;width:105px;height:24px;background:#fff"></div><div class="t" style="left:-335.0px;width:2000px;text-align:center;top:388.20px;font-size:13px;line-height:13px;color:#333;font-weight:normal;font-style:normal;">&lt;ВалютаДокумента&gt;</div></div></div>
<div class="a" style="left:489px;top:387px;width:123px;height:24px;overflow:hidden"><div class="a" style="left:-489px;top:-387px;width:1440px;height:900px"><div class="a" style="left:535px;top:387px;width:77px;height:24px;background:#fff"></div><div class="t" style="left:-427.0px;width:2000px;text-align:center;top:388.20px;font-size:13px;line-height:13px;color:#333;font-weight:normal;font-style:normal;">&lt;ВалютаДокумента&gt;</div></div></div>
<div class="a" style="left:121px;top:361px;width:1052px;height:1px;background:#333"></div>
<div class="a" style="left:1173px;top:361px;width:32px;height:1px;background:#e3e3e3"></div>
<div class="a" style="left:154px;top:361px;width:1px;height:50px;background:#333"></div>
<div class="a" style="left:399px;top:361px;width:1px;height:50px;background:#333"></div>
<div class="a" style="left:464px;top:361px;width:1px;height:50px;background:#333"></div>
<div class="a" style="left:534px;top:361px;width:1px;height:50px;background:#333"></div>
<div class="a" style="left:612px;top:361px;width:1px;height:50px;background:#333"></div>
<div class="a" style="left:718px;top:361px;width:1px;height:50px;background:#333"></div>
<div class="a" style="left:779px;top:361px;width:1px;height:50px;background:#333"></div>
<div class="a" style="left:894px;top:361px;width:1px;height:50px;background:#333"></div>
<div class="a" style="left:535px;top:386px;width:77px;height:1px;background:#e3e3e3"></div>
<div class="a" style="left:613px;top:386px;width:105px;height:1px;background:#e3e3e3"></div>
<div class="a" style="left:780px;top:386px;width:114px;height:1px;background:#e3e3e3"></div>
<div class="a" style="left:895px;top:386px;width:113px;height:1px;background:#e3e3e3"></div>
<div class="a" style="left:121px;top:361px;width:1px;height:50px;background:#a6a6a6"></div>
<div class="a" style="left:1008px;top:22px;width:1px;height:667px;background:#ff0000"></div>
<div class="a" style="left:1173px;top:22px;width:1px;height:667px;background:#ff0000"></div>
<div class="a" style="left:79px;top:411px;width:1126px;height:1px;background:#ff0000"></div>
</div>
<div class="a" style="left:1409px;top:206px;width:8px;height:644px;border-radius:4px;background:#d6d6d6"></div>
<div class="a" style="left:1409px;top:206px;width:8px;height:142px;border-radius:4px;background:#9b9b9b"></div>
<svg class="a" style="left:1409px;top:191px" width="8" height="5"><path d="M0.5 4.5 L4 0.5 L7.5 4.5Z" fill="#c0c0c0"/></svg>
<svg class="a" style="left:1409px;top:858px" width="8" height="5"><path d="M0.5 0.5 L7.5 0.5 L4 4.5Z" fill="#666"/></svg>
<div class="a" style="left:224px;top:876px;width:1160px;height:8px;border-radius:4px;background:#d6d6d6"></div>
<div class="a" style="left:224px;top:876px;width:961px;height:8px;border-radius:4px;background:#9b9b9b"></div>
<svg class="a" style="left:209px;top:876px" width="5" height="8"><path d="M4.5 0.5 L4.5 7.5 L0.5 4Z" fill="#c0c0c0"/></svg>
<svg class="a" style="left:1391px;top:876px" width="5" height="8"><path d="M0.5 0.5 L0.5 7.5 L4.5 4Z" fill="#666"/></svg>
</body></html>
